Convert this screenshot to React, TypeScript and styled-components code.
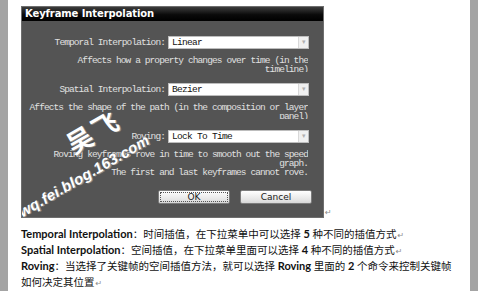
import React from "react";
import styled, { createGlobalStyle } from "styled-components";

const GlobalStyle = createGlobalStyle`
  html, body {
    margin: 0;
    padding: 0;
    background: #ffffff;
  }
  body {
    width: 478px;
    height: 291px;
    overflow: hidden;
  }
`;

const mono = `"Liberation Mono", "DejaVu Sans Mono", monospace`;
const cjk = `"Lato", "Noto Sans CJK SC", sans-serif`;

type FieldProps = {
  label: string;
  value: string;
};

const Field = ({ label, value }: FieldProps) => (
  <FieldRow>
    <FieldLabel>{label}</FieldLabel>
    <Select>
      <SelectValue>{value}</SelectValue>
      <SelectArrow>▾</SelectArrow>
    </Select>
  </FieldRow>
);

const App = () => {
  return (
    <>
      <GlobalStyle />
      <Page>
        <SideBar />
        <Sheet>
          <FigureRow>
            <Dialog>
              <TitleBar>Keyframe Interpolation</TitleBar>
              <DialogBody>
                <Field label="Temporal Interpolation:" value="Linear" />
                <Description $height={16}>
                  Affects how a property changes over time (in the
                  <br />
                  timeline)
                </Description>
                <Field label="Spatial Interpolation:" value="Bezier" />
                <Description $height={16}>
                  Affects the shape of the path (in the composition or layer
                  <br />
                  panel)
                </Description>
                <Field label="Roving:" value="Lock To Time" />
                <Description $height={30}>
                  Roving keyframes rove in time to smooth out the speed
                  <br />
                  graph.
                  <br />
                  The first and last keyframes cannot rove.
                </Description>
                <ButtonRow>
                  <Button $focused>OK</Button>
                  <Button>Cancel</Button>
                </ButtonRow>
              </DialogBody>
              <WatermarkName>吴飞</WatermarkName>
              <WatermarkUrl>wq.fei.blog.163.com</WatermarkUrl>
            </Dialog>
            <ReturnMark>↵</ReturnMark>
          </FigureRow>
          <Notes>
            <Line>
              <Term>Temporal Interpolation</Term>：时间插值，在下拉菜单中可以选择{" "}
              <Term>5</Term> 种不同的插值方式<ReturnMark>↵</ReturnMark>
            </Line>
            <Line>
              <Term>Spatial Interpolation</Term>：空间插值，在下拉菜单里面可以选择{" "}
              <Term>4</Term> 种不同的插值方式<ReturnMark>↵</ReturnMark>
            </Line>
            <Line>
              <Term>Roving</Term>：当选择了关键帧的空间插值方法，就可以选择{" "}
              <Term>Roving</Term> 里面的 <Term>2</Term> 个命令来控制关键帧
            </Line>
            <Line>
              如何决定其位置<ReturnMark>↵</ReturnMark>
            </Line>
          </Notes>
        </Sheet>
        <SideBar />
      </Page>
    </>
  );
};

export default App;

const Page = styled.div`
  display: flex;
  width: 478px;
  height: 291px;
`;

const SideBar = styled.div`
  width: 8px;
  flex-shrink: 0;
  background: #a4a4a4;
`;

const Sheet = styled.div`
  flex: 1;
  padding: 6px 0 0 13px;
  background: #ffffff;
`;

const FigureRow = styled.div`
  display: flex;
  align-items: flex-end;
`;

const Dialog = styled.div`
  position: relative;
  width: 303px;
  height: 212px;
  box-sizing: border-box;
  border: 1px solid #6e6e6e;
  background: #545454;
  overflow: hidden;
`;

const TitleBar = styled.div`
  height: 14px;
  padding-left: 3px;
  background: linear-gradient(#3c3c3c 0%, #0a0a0a 55%, #000000 100%);
  color: #ffffff;
  font-family: "DejaVu Sans", sans-serif;
  font-weight: bold;
  font-size: 10px;
  line-height: 14px;
  letter-spacing: -0.1px;
`;

const DialogBody = styled.div`
  display: flex;
  flex-direction: column;
  padding: 15px 0 0 0;
`;

const FieldRow = styled.div`
  display: grid;
  grid-template-columns: 143px 141px;
  column-gap: 3px;
  align-items: center;
`;

const FieldLabel = styled.div`
  text-align: right;
  color: #e0e0e0;
  font-family: ${mono};
  font-size: 9.5px;
  letter-spacing: -0.9px;
  white-space: nowrap;
`;

const Select = styled.div`
  display: flex;
  height: 13px;
  box-sizing: border-box;
  border: 1px solid #bdbdbd;
  background: #ffffff;
`;

const SelectValue = styled.div`
  flex: 1;
  padding-left: 3px;
  color: #111111;
  font-family: ${mono};
  font-size: 9.5px;
  line-height: 11px;
  letter-spacing: -0.7px;
`;

const SelectArrow = styled.div`
  width: 9px;
  border-left: 1px solid #d8d8d8;
  background: #f0f0f0;
  color: #b0b0b0;
  font-size: 7px;
  line-height: 11px;
  text-align: center;
`;

const Description = styled.div<{ $height: number }>`
  height: ${(p) => p.$height}px;
  margin: 7px 15px 11px 0;
  overflow: hidden;
  text-align: right;
  color: #e0e0e0;
  font-family: ${mono};
  font-size: 9.5px;
  line-height: 9px;
  letter-spacing: -0.9px;
  white-space: nowrap;
`;

const ButtonRow = styled.div`
  display: flex;
  justify-content: flex-end;
  gap: 10px;
  margin-right: 11px;
  margin-top: -1px;
`;

const Button = styled.div<{ $focused?: boolean }>`
  position: relative;
  width: 72px;
  height: 14px;
  box-sizing: border-box;
  border: 1px solid #7c7c7c;
  border-radius: 2px;
  background: linear-gradient(#ffffff, #e6e6e6 70%, #d6d6d6);
  color: #1a1a1a;
  font-family: "DejaVu Sans", sans-serif;
  font-size: 9px;
  line-height: 12px;
  text-align: center;
  outline: ${(p) => (p.$focused ? "1px dotted #555" : "none")};
  outline-offset: -3px;
`;

const WatermarkUrl = styled.div`
  position: absolute;
  left: 2px;
  top: 196px;
  transform: rotate(-30deg);
  transform-origin: left bottom;
  color: #ffffff;
  font-family: "Liberation Sans", sans-serif;
  font-weight: bold;
  font-style: italic;
  font-size: 15px;
  letter-spacing: 0.3px;
  text-shadow: 1px 1px 0 #8a8a8a;
  white-space: nowrap;
`;

const WatermarkName = styled.div`
  position: absolute;
  left: 42px;
  top: 110px;
  transform: rotate(-30deg);
  color: #ffffff;
  font-family: "Noto Sans CJK SC", sans-serif;
  font-weight: bold;
  font-size: 26px;
  line-height: 28px;
  letter-spacing: 3px;
  text-shadow: 1px 1px 0 #8a8a8a;
  white-space: nowrap;
`;

const ReturnMark = styled.span`
  color: #8c8c8c;
  font-family: "DejaVu Sans", sans-serif;
  font-size: 8px;
  line-height: 10px;
  margin-left: 1px;
`;

const Notes = styled.div`
  margin-top: 8px;
  color: #111111;
  font-family: ${cjk};
  font-size: 10.5px;
  line-height: 16px;
`;

const Line = styled.div`
  white-space: nowrap;
`;

const Term = styled.span`
  font-weight: bold;
  font-size: 11px;
`;
